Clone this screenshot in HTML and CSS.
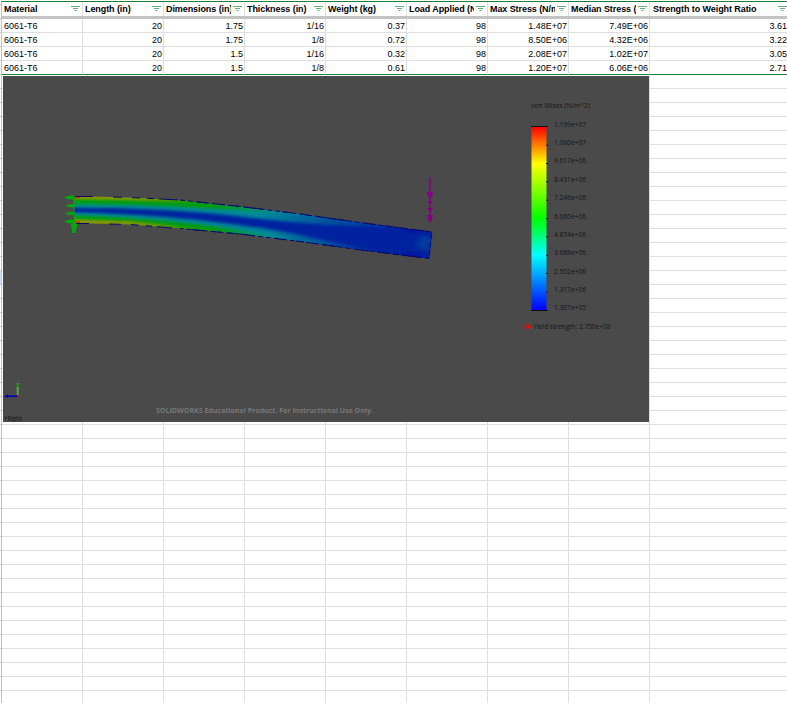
FILE: index.html
```html
<!DOCTYPE html>
<html lang="en">
<head>
<meta charset="utf-8">
<title>Beam stress results</title>
<link rel="stylesheet" href="styles.css">
</head>
<body>
<svg width="0" height="0" class="defs"><symbol id="filter" viewBox="0 0 9 6"><path d="M0 .5H9M2 2.5H7M3.5 4.5H5.5" stroke="#65ad7d" fill="none"/></symbol></svg>
<main class="sheet">
  <div class="row head">
    <div class="cell"><span>Material</span><svg><use href="#filter"/></svg></div>
    <div class="cell"><span>Length (in)</span><svg><use href="#filter"/></svg></div>
    <div class="cell"><span>Dimensions (in)</span><svg><use href="#filter"/></svg></div>
    <div class="cell"><span>Thickness (in)</span><svg><use href="#filter"/></svg></div>
    <div class="cell"><span>Weight (kg)</span><svg><use href="#filter"/></svg></div>
    <div class="cell"><span>Load Applied (N)</span><svg><use href="#filter"/></svg></div>
    <div class="cell"><span>Max Stress (N/m</span><svg><use href="#filter"/></svg></div>
    <div class="cell"><span>Median Stress (</span><svg><use href="#filter"/></svg></div>
    <div class="cell"><span>Strength to Weight Ratio</span><svg><use href="#filter"/></svg></div>
  </div>
  <div class="row"><div class="cell">6061-T6</div><div class="cell">20</div><div class="cell">1.75</div><div class="cell">1/16</div><div class="cell">0.37</div><div class="cell">98</div><div class="cell">1.48E+07</div><div class="cell">7.49E+06</div><div class="cell">3.61</div></div>
  <div class="row"><div class="cell">6061-T6</div><div class="cell">20</div><div class="cell">1.75</div><div class="cell">1/8</div><div class="cell">0.72</div><div class="cell">98</div><div class="cell">8.50E+06</div><div class="cell">4.32E+06</div><div class="cell">3.22</div></div>
  <div class="row"><div class="cell">6061-T6</div><div class="cell">20</div><div class="cell">1.5</div><div class="cell">1/16</div><div class="cell">0.32</div><div class="cell">98</div><div class="cell">2.08E+07</div><div class="cell">1.02E+07</div><div class="cell">3.05</div></div>
  <div class="row last"><div class="cell">6061-T6</div><div class="cell">20</div><div class="cell">1.5</div><div class="cell">1/8</div><div class="cell">0.61</div><div class="cell">98</div><div class="cell">1.20E+07</div><div class="cell">6.06E+06</div><div class="cell">2.71</div></div>
  <div class="blank">
    <svg class="plot" viewBox="3 76 646 346">
      <defs>
        <linearGradient id="scale" x1="0" y1="0" x2="0" y2="1"><stop offset="0" stop-color="#f00"/><stop offset=".2" stop-color="#ff0"/><stop offset=".5" stop-color="#0f0"/><stop offset=".7" stop-color="#0ff"/><stop offset="1" stop-color="#00f"/></linearGradient>
        <linearGradient id="edge" gradientUnits="userSpaceOnUse" x1="74" y1="0" x2="432" y2="0"><stop offset="0" stop-color="#8f9500"/><stop offset=".2" stop-color="#709900"/><stop offset=".36" stop-color="#0c9a0b"/><stop offset=".48" stop-color="#06963e"/><stop offset=".57" stop-color="#008b91"/><stop offset=".7" stop-color="#0068a0"/><stop offset=".82" stop-color="#0030a0"/><stop offset="1" stop-color="#0018a0"/></linearGradient>
        <linearGradient id="mid" gradientUnits="userSpaceOnUse" x1="74" y1="0" x2="432" y2="0"><stop offset="0" stop-color="#009d12"/><stop offset=".4" stop-color="#009a18"/><stop offset=".55" stop-color="#008f90"/><stop offset=".75" stop-color="#0044a0"/><stop offset="1" stop-color="#001aa0"/></linearGradient>
        <linearGradient id="teal" gradientUnits="userSpaceOnUse" x1="74" y1="0" x2="432" y2="0"><stop offset="0" stop-color="#00908a"/><stop offset=".52" stop-color="#00899a"/><stop offset=".72" stop-color="#0050a0"/><stop offset="1" stop-color="#001ca0"/></linearGradient>
        <filter id="soft" x="-10%" y="-40%" width="120%" height="180%"><feGaussianBlur stdDeviation="1.3"/></filter>
        <filter id="softer" x="-10%" y="-40%" width="120%" height="180%"><feGaussianBlur stdDeviation="3 1.8"/></filter>
        <clipPath id="beam"><path d="M74 196L130 197.500L180 200L240 206.500L300 214L360 222.500L432 232L429 258.500L365 250.500L300 241.500L240 234L180 228.500L130 224.500L74 223Z"/></clipPath>
      </defs>
      <rect x="3" y="76" width="646" height="346" fill="#4a4a4a"/>
      <g clip-path="url(#beam)">
        <path d="M70 190H436V265H70Z" fill="url(#edge)"/>
        <path d="M60 199L130 200.500L180 202.500L240 207L300 214L440 225V264L365 252L300 243L240 233L180 226L130 221L60 219Z" fill="url(#mid)" filter="url(#soft)"/>
        <path d="M60 204C120 203.500 185 206.500 240 210.500S310 218 440 228V260L365 250L300 239.500C250 231.500 170 216.500 60 215Z" fill="url(#teal)" filter="url(#soft)"/>
        <g filter="url(#softer)">
          <path d="M50 208C120 207 185 210 240 216.500S330 226 390 227L450 229V265L400 258C365 250 310 236 270 229.500C220 222 150 212.500 50 212Z" fill="#0020a0"/>
          <path d="M420 237L431 237L428 252L417 247Z" fill="#003ca0"/>
          <path d="M400 227L424 231L410 233ZM400 254L424 258L413 252Z" fill="#0008a0"/>
        </g>
        <path d="M74 197.500h6M74 222h6" stroke="#a04800" stroke-width="1.500"/>
      </g>
      <g fill="none" stroke="#08086d" stroke-width="1">
        <path d="M74 196.500H93L130 197.500L180 200L240 206.500L300 214L360 222.500L432 232" stroke-dasharray="19 20 9 10 8 7 7 5"/>
        <path d="M74 223.500H89L130 224.500L180 228.500L240 234L300 241.500L365 250.500L429 258.500" stroke-dasharray="15 20 12 10 8 7 6 5"/>
        <path d="M180 200L240 206.500L300 214L360 222.500L432 232L429 258.500L365 250.500L300 241.500L240 234L180 228.500" stroke-dasharray="5 3"/>
      </g>
      <g fill="#00a80c"><path d="M73 196h1.500v27H76v10h-4v-10h1zM64 197.500l5-2h5v4h-5zM65 205.800l4-1.500h4v3h-4zM65 213.500l4-1.500h4v3h-4zM64 221.500l5-2h5v4h-5zM71 224h6v4h-6z"/></g>
      <path d="M73.500 208v13" stroke="#067811" stroke-width=".7"/>
      <path fill="#850085" d="M429.300 177h1.500v40h-1.500zM427 192h6l-1 4-2 3-2-3zM427.500 201h5l-2.500 5zM427.500 208h5l-2.500 5zM427 215h6l-1 4-2 4-2-4z"/>
      <text x="531" y="108.200" textLength="59" lengthAdjust="spacingAndGlyphs" class="label">von Mises (N/m^2)</text>
      <rect x="531.500" y="127" width="15" height="183" fill="url(#scale)"/>
      <path d="M531 126.500h17M531 310.500h17M546 145.200h2M546 163.500h2M546 181.800h2M546 200.200h2M546 218.500h2M546 236.800h2M546 255.200h2M546 273.500h2M546 291.800h2" stroke="#111"/>
      <g class="label"><text x="554" y="126.700" textLength="32" lengthAdjust="spacingAndGlyphs">1.199e+07</text><text x="554" y="145.100" textLength="32" lengthAdjust="spacingAndGlyphs">1.080e+07</text><text x="554" y="163.400" textLength="32" lengthAdjust="spacingAndGlyphs">9.617e+06</text><text x="554" y="181.800" textLength="32" lengthAdjust="spacingAndGlyphs">8.431e+06</text><text x="554" y="200.100" textLength="32" lengthAdjust="spacingAndGlyphs">7.246e+06</text><text x="554" y="218.500" textLength="32" lengthAdjust="spacingAndGlyphs">6.060e+06</text><text x="554" y="236.900" textLength="32" lengthAdjust="spacingAndGlyphs">4.874e+06</text><text x="554" y="255.200" textLength="32" lengthAdjust="spacingAndGlyphs">3.688e+06</text><text x="554" y="273.600" textLength="32" lengthAdjust="spacingAndGlyphs">2.502e+06</text><text x="554" y="291.900" textLength="32" lengthAdjust="spacingAndGlyphs">1.317e+06</text><text x="554" y="310.400" textLength="32" lengthAdjust="spacingAndGlyphs">1.307e+05</text><text x="533.500" y="329" textLength="77" lengthAdjust="spacingAndGlyphs">Yield strength: 2.750e+08</text></g>
      <path d="M517 326.500h9" stroke="#8f2828" stroke-width=".6"/><path d="M526.500 323l5 3.500-5 3.500z" fill="#f00"/>
      <path d="M17.700 395V383" stroke="#52a952" stroke-width="2"/><path d="M15.500 387l2.200-4 2.200 4zM17 377.500h1.500v1H17z" fill="#208020"/><path d="M18 396.200H5" stroke="#0000b8" stroke-width="1.700"/><path d="M4 396.200l4-1.700v3.400z" fill="#0000b8"/><path d="M17.300 395.300h2v2h-2z" fill="#c02010"/>
      <text x="4" y="420.700" textLength="18" lengthAdjust="spacingAndGlyphs" class="label">*Right</text>
      <text x="156" y="413.400" textLength="217" lengthAdjust="spacingAndGlyphs" class="notice">SOLIDWORKS Educational Product. For Instructional Use Only.</text>
    </svg>
  </div>
</main>
</body>
</html>
```
FILE: styles.css
```css
* { box-sizing: border-box; }
body { margin: 0; background: #fff; font: 9px/13px "Liberation Sans", Arial, sans-serif; color: #000; overflow: hidden; }
.defs { display: block; }
.sheet { height: 703px; padding: 1px 0 0 1px;
  background: linear-gradient(#cfe0fb, #cfe0fb) 0 271px / 1px 13px no-repeat, repeating-linear-gradient(to bottom, transparent 0 4px, #c8c8c8 4px 5px, transparent 5px 14px) 0 0 / 1px 100% no-repeat, #fff; }
.row { display: grid; grid-template-columns: repeat(8, 81px) 137px; height: 14px; border-left: 1px solid #c0c0c0; }
.row, .blank { background-color: #fff; }
.cell { min-width: 0; padding: 1px 1px 0 2px; line-height: 12px; text-align: right; white-space: nowrap; border-right: 1px solid #dfdfdf; border-bottom: 1px solid #dfdfdf; }
.cell:first-child { text-align: left; }
.cell:last-child { border-right: 0; padding-right: 0; }
.head { height: 18px; border-top: 1px solid #188038; border-bottom: 3px solid #c3c3c3; font-weight: bold; letter-spacing: -.08px; }
.head .cell { display: flex; align-items: center; padding: 0 2px 0 2px; border-bottom: 0; }
.head .cell:last-child { padding: 0 0 0 3px; }
.head span { flex: 1; min-width: 0; overflow: hidden; text-align: left; }
.head svg { flex: none; width: 9px; height: 6px; margin-left: 2px; }
.last .cell { border-bottom-color: #188038; }
.blank { height: 629px; padding: 1px 0 0 1px; border-left: 1px solid #c0c0c0;
  background-image: linear-gradient(to right, transparent 647px, #dfdfdf 647px 648px, transparent 648px), repeating-linear-gradient(to bottom, transparent 0 13px, #dfdfdf 13px 14px), linear-gradient(to right, transparent 648px, #fff 648px), repeating-linear-gradient(to right, transparent 0 80px, #dfdfdf 80px 81px); }
.plot { display: block; width: 646px; height: 346px; }
.label { font: 7px "Open Sans", sans-serif; fill: #151515; }
.notice { font: 700 7px "Open Sans", sans-serif; fill: #777; }
```
